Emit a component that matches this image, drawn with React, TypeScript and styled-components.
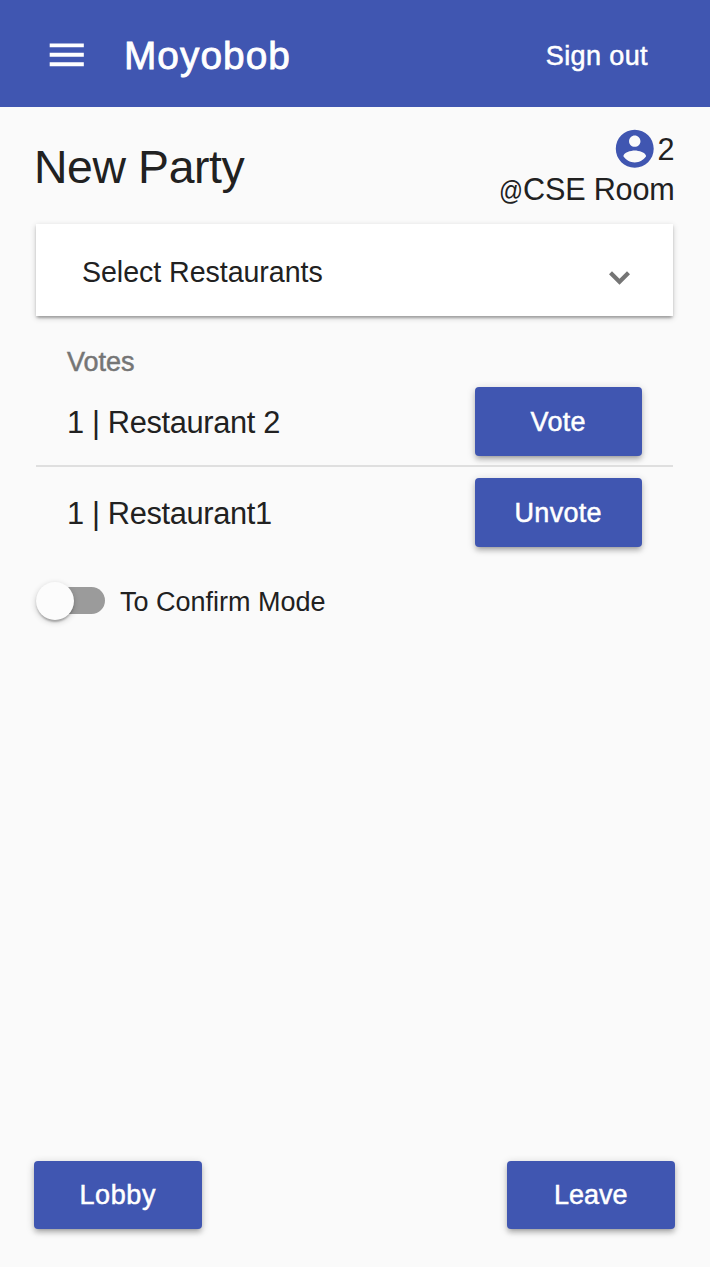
import React from 'react';
import styled, { createGlobalStyle } from 'styled-components';

const primary = '#4056b1';
const ink = '#212121';

const GlobalStyle = createGlobalStyle`
  * { box-sizing: border-box; }
  html, body { margin: 0; background: #fff; }
  body { font-family: "Liberation Sans", Arial, sans-serif; color: ${ink}; }
  button { font-family: inherit; border: 0; padding: 0; margin: 0; background: none; cursor: pointer; }
  h1, h2, p { margin: 0; font-weight: 400; }
  svg { display: block; fill: currentColor; flex: none; }
`;

const Page = styled.div`
  width: 710px;
  height: 1267px;
  background: #fafafa;
  display: flex;
  flex-direction: column;
`;

const AppBar = styled.header`
  height: 107px;
  flex: none;
  padding: 3px 62px 0 43.5px;
  display: flex;
  align-items: center;
  background: ${primary};
  color: #fff;
`;

const MenuButton = styled.button`
  color: #fff;
  margin-right: 35px;
`;

const Brand = styled.h1`
  flex: 1;
  font-size: 38.8px;
  line-height: 60px;
  padding-top: 1px;
  letter-spacing: 1.05px;
  -webkit-text-stroke: 0.8px currentColor;
`;

const SignOut = styled.button`
  color: #fff;
  font-size: 27px;
  line-height: 40px;
  padding-top: 1px;
  letter-spacing: 0.4px;
  -webkit-text-stroke: 0.5px currentColor;
`;

const Main = styled.main`
  flex: 1;
  display: flex;
  flex-direction: column;
  padding: 19px 37px 38px 36px;
`;

const PartyHeader = styled.div`
  display: flex;
  justify-content: space-between;
  height: 98px;
`;

const PartyName = styled.h2`
  font-size: 46.4px;
  line-height: 54px;
  padding-top: 14px;
  margin-left: -2px;
  letter-spacing: -0.4px;
`;

const PartyInfo = styled.div`
  display: flex;
  flex-direction: column;
  align-items: flex-end;
  font-size: 30.6px;
  margin-right: -1.5px;
`;

const Members = styled.div`
  display: flex;
  align-items: center;
  height: 45px;
  color: ${ink};
  svg { color: ${primary}; }
  span { margin-left: -0.5px; padding-top: 1px; }
`;

const Place = styled.p`
  line-height: 36px;
  letter-spacing: -0.2px;
`;

const AtSign = styled.span`
  display: inline-block;
  width: 24px;
  font-size: 28.5px;
  transform: scaleX(0.83);
  transform-origin: left center;
`;

const SelectPanel = styled.button`
  height: 91.5px;
  flex: none;
  display: flex;
  align-items: center;
  justify-content: space-between;
  padding: 5px 43px 0 46px;
  background: #fff;
  color: ${ink};
  font-size: 28.6px;
  letter-spacing: -0.05px;
  box-shadow: 0 2px 6px rgba(0, 0, 0, 0.2), 0 2px 2px rgba(0, 0, 0, 0.14),
    0 4px 2px -2px rgba(0, 0, 0, 0.12);
  svg { color: #757575; margin-top: 11px; }
`;

const VotesTitle = styled.p`
  margin-top: 29px;
  padding-left: 31px;
  font-size: 27px;
  line-height: 34px;
  height: 31px;
  color: #757575;
  -webkit-text-stroke: 0.5px currentColor;
`;

const VoteRow = styled.div<{ $divided?: boolean }>`
  height: 91px;
  display: flex;
  align-items: center;
  justify-content: space-between;
  padding: 3px 31px 0 31px;
  border-bottom: 2px solid ${(p) => (p.$divided ? '#dfdfdf' : 'transparent')};
`;

const VoteLabel = styled.span`
  font-size: 30.8px;
  line-height: 36px;
  padding-top: 3px;
  letter-spacing: -0.35px;
`;

const ActionButton = styled.button<{ $spacing?: number }>`
  width: 167.5px;
  height: 68.5px;
  padding-top: 1px;
  border-radius: 4px;
  background: ${primary};
  color: #fff;
  font-size: 27px;
  line-height: 32px;
  letter-spacing: ${(p) => p.$spacing ?? 0.4}px;
  -webkit-text-stroke: 0.5px currentColor;
  box-shadow: 0 2px 8px rgba(0, 0, 0, 0.2), 0 4px 4px rgba(0, 0, 0, 0.14),
    0 5px 2px -4px rgba(0, 0, 0, 0.12);
`;

const ModeSwitch = styled.label`
  display: flex;
  align-items: center;
  margin-top: 23px;
  height: 40px;
`;

const Track = styled.span`
  width: 64.5px;
  height: 27px;
  margin-left: 4px;
  border-radius: 14px;
  background: #9b9b9b;
  display: flex;
  align-items: center;
`;

const Thumb = styled.span`
  width: 38px;
  height: 38px;
  flex: none;
  margin-left: -4px;
  border-radius: 50%;
  background: #fcfcfc;
  box-shadow: 0 2px 6px rgba(0, 0, 0, 0.2), 0 2px 2px rgba(0, 0, 0, 0.14),
    0 4px 2px -2px rgba(0, 0, 0, 0.12);
`;

const ModeLabel = styled.span`
  margin-left: 15.5px;
  padding-top: 2px;
  font-size: 27px;
  line-height: 32px;
  letter-spacing: 0;
`;

const Footer = styled.footer`
  margin: auto -1.5px 0 -2px;
  display: flex;
  justify-content: space-between;
`;

const votes = [
  { count: 1, name: 'Restaurant 2', action: 'Vote', spacing: 0.3 },
  { count: 1, name: 'Restaurant1', action: 'Unvote', spacing: 0.3 },
];

export default function App() {
  return (
    <>
      <GlobalStyle />
      <Page>
        <AppBar>
          <MenuButton aria-label="Menu">
            <svg width="45.5" height="45.5" viewBox="0 0 24 24">
              <path d="M3 18h18v-2H3v2zm0-5h18v-2H3v2zm0-7v2h18V6H3z" />
            </svg>
          </MenuButton>
          <Brand>Moyobob</Brand>
          <SignOut>Sign out</SignOut>
        </AppBar>
        <Main>
          <PartyHeader>
            <PartyName>New Party</PartyName>
            <PartyInfo>
              <Members>
                <svg width="45.5" height="45.5" viewBox="0 0 24 24">
                  <path d="M12 2C6.48 2 2 6.48 2 12s4.48 10 10 10 10-4.48 10-10S17.52 2 12 2zm0 3c1.66 0 3 1.34 3 3s-1.34 3-3 3-3-1.34-3-3 1.34-3 3-3zm0 14.2c-2.5 0-4.71-1.28-6-3.22.03-1.99 4-3.08 6-3.08 1.99 0 5.97 1.09 6 3.08-1.29 1.94-3.5 3.22-6 3.22z" />
                </svg>
                <span>2</span>
              </Members>
              <Place><AtSign>@</AtSign>CSE Room</Place>
            </PartyInfo>
          </PartyHeader>
          <SelectPanel>
            <span>Select Restaurants</span>
            <svg width="21" height="14" viewBox="0 0 21 14">
              <path d="M3 0.2 10.5 7.7 18 0.2 21 3.2 10.5 13.7 0 3.2z" />
            </svg>
          </SelectPanel>
          <VotesTitle>Votes</VotesTitle>
          {votes.map((vote, i) => (
            <VoteRow key={vote.name} $divided={i < votes.length - 1}>
              <VoteLabel>
                {vote.count} | {vote.name}
              </VoteLabel>
              <ActionButton $spacing={vote.spacing}>{vote.action}</ActionButton>
            </VoteRow>
          ))}
          <ModeSwitch>
            <Track>
              <Thumb />
            </Track>
            <ModeLabel>To Confirm Mode</ModeLabel>
          </ModeSwitch>
          <Footer>
            <ActionButton $spacing={0.6}>Lobby</ActionButton>
            <ActionButton $spacing={0}>Leave</ActionButton>
          </Footer>
        </Main>
      </Page>
    </>
  );
}
